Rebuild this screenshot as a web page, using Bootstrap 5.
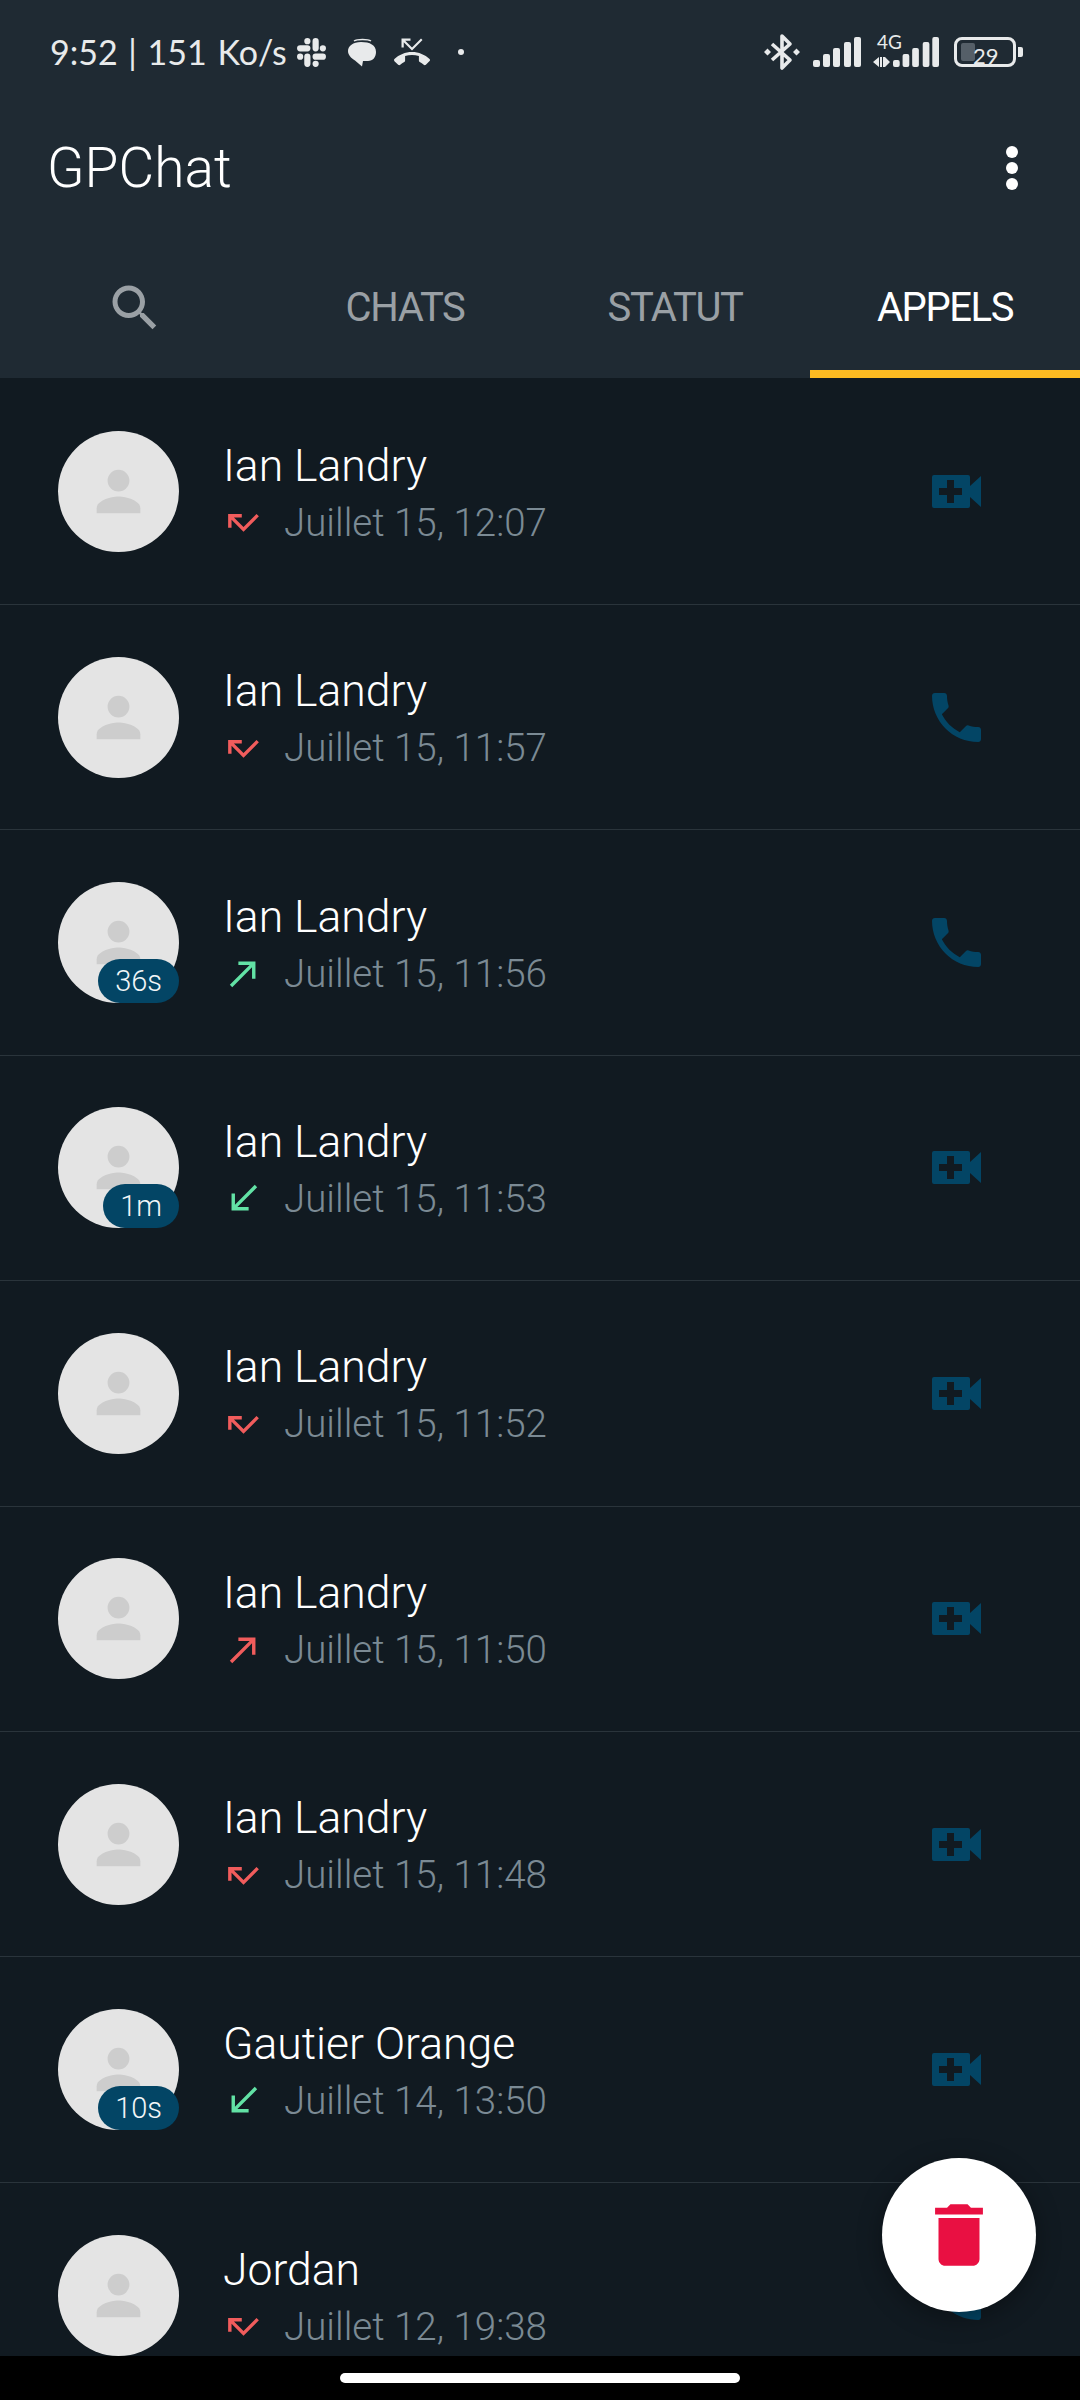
<!DOCTYPE html>
<html lang="fr">
<head>
    <meta charset="UTF-8">
    <meta name="viewport" content="width=device-width, initial-scale=1.0">
    <title>GPChat</title>
    <link href="https://cdn.jsdelivr.net/npm/bootstrap@5.3.0/dist/css/bootstrap.min.css" rel="stylesheet">
    <style>
    body {
        background-color: #000;
        font-family: Roboto, "Liberation Sans", sans-serif;
        width: 1080px;
    }
    .phone-page { height: 2400px; width: 1080px; }
    .app-head { background-color: #1f2a33; height: 378px; flex: none; }
    .status-strip { height: 104px; padding: 0 57px 0 50px; color: #e8eaeb; fill: #e8eaeb; }
    .status-time { font-family: Lato, sans-serif; font-size: 34px; word-spacing: 2px; line-height: 1; width: 246px; white-space: nowrap; }
    .st-bubble { margin-left: 21px; }
    .st-call { margin-left: 18px; }
    .st-dot { margin-left: 28px; }
    .st-bt { margin-right: 13px; }
    .st-net { margin-left: 12px; margin-right: 15px; }
    .battery-box {
        position: relative; width: 62px; height: 30px; border: 3px solid #e8eaeb; border-radius: 8px;
    }
    .battery-fill { position: absolute; left: 4px; top: 3px; width: 14px; height: 18px; background: #555f68; border-radius: 2px; }
    .battery-num { position: absolute; left: 16px; top: 5px; font-family: Lato, sans-serif; font-size: 22px; line-height: 22px; }
    .battery-nub { width: 5px; height: 10px; background: #e8eaeb; border-radius: 0 2px 2px 0; margin-left: 2px; }
    .app-bar { height: 128px; padding: 0 62px 0 47px; }
    .app-title { font-size: 55px; font-weight: 300; color: #fff; line-height: 1; }
    .kebab { width: 12px; }
    .kebab i { display: block; width: 12px; height: 12px; border-radius: 50%; background: #fff; margin-bottom: 4px; }
    .kebab i:last-child { margin-bottom: 0; }
    .tab-strip { height: 146px; flex-wrap: nowrap; }
    .tab-cell {
        width: 270px; height: 146px; padding-top: 13px; color: #9aa0a5; font-size: 40px; letter-spacing: -1.4px;
        border-bottom: 8px solid transparent; line-height: 1;
    }
    .tab-cell.tab-on { color: #fff; border-bottom-color: #fdbb22; }
    .call-list { background-color: #111a21; overflow: hidden; padding-top: 1.5px; }
    .call-row {
        height: 225.43px; padding: 0 99px 0 58px; background: transparent;
        border-color: #2a343b; border-radius: 0;
    }
    .avatar-wrap { position: relative; width: 121px; height: 121px; margin-right: 44px; flex: none; }
    .avatar-wrap svg { display: block; }
    .time-pill {
        position: absolute; right: 0; bottom: 0; height: 44px; padding: 0 17px; background: #034565;
        border-radius: 22px; color: #f2f6f8; font-size: 29px; font-weight: 300; line-height: 44px;
    }
    .call-text { padding-top: 5px; }
    .who { font-size: 44.500px; font-weight: 300; color: #fff; line-height: 56px; white-space: nowrap; }
    .when { font-size: 38.500px; font-weight: 300; color: #7b8a94; line-height: 56px; margin-top: 1px; white-space: nowrap; }
    .when svg { margin-right: 20px; flex: none; }
    .call-kind { width: 49px; flex: none; fill: #034565; }
    .fab-bin {
        position: absolute; left: 882px; top: 2158px; width: 154px; height: 154px; background: #fff;
        box-shadow: 0 6px 24px rgba(0, 0, 0, .35);
    }
    .nav-foot { height: 44px; flex: none; background: #000; }
    .home-pill { width: 400px; height: 10px; background: #fff; border-radius: 5px; margin-top: -1px; }
    </style>
</head>
<body>
<svg width="0" height="0" class="position-absolute">
    <symbol id="i-face" viewBox="0 0 122 122">
        <circle cx="61" cy="61" r="61" fill="#e4e4e4"/>
        <circle cx="61" cy="50" r="11" fill="#cdcdcd"/>
        <path d="M39 83v-5c0-8 14-12 22-12s22 4 22 12v5z" fill="#cdcdcd"/>
    </symbol>
    <symbol id="i-missed" viewBox="0 0 24 24"><path fill="#f15c5c" d="M19.59 7L12 14.59 6.41 9H11V7H3v8h2v-4.59l7 7 9-9z"/></symbol>
    <symbol id="i-out-red" viewBox="0 0 24 24"><path fill="#f15c5c" d="M9 5v2h6.59L4 18.59 5.41 20 17 8.41V15h2V5z"/></symbol>
    <symbol id="i-out" viewBox="0 0 24 24"><path fill="#62e2a5" d="M9 5v2h6.59L4 18.59 5.41 20 17 8.41V15h2V5z"/></symbol>
    <symbol id="i-in" viewBox="0 0 24 24"><path fill="#62e2a5" d="M20 5.41L18.59 4 7 15.59V9H5v10h10v-2H8.41z"/></symbol>
    <symbol id="i-video" viewBox="0 0 49 33">
        <path fill-rule="evenodd" d="M2 0h34a2 2 0 0 1 2 2v9L49 1v31L38 22v9a2 2 0 0 1-2 2H2a2 2 0 0 1-2-2V2a2 2 0 0 1 2-2zM15 5v8H7v7h8v8h7v-8h8v-7h-8V5z"/>
    </symbol>
    <symbol id="i-phone" viewBox="3 3 18 18">
        <path d="M6.62 10.79c1.44 2.83 3.76 5.14 6.59 6.59l2.2-2.2c.27-.27.67-.36 1.02-.24 1.12.37 2.33.57 3.57.57.55 0 1 .45 1 1V20c0 .55-.45 1-1 1-9.39 0-17-7.61-17-17 0-.55.45-1 1-1h3.5c.55 0 1 .45 1 1 0 1.25.2 2.45.57 3.57.11.35.03.74-.25 1.02l-2.2 2.2z"/>
    </symbol>
    <symbol id="i-bars" viewBox="0 0 48 30" preserveAspectRatio="none">
        <rect x="0" y="23" width="7" height="7" rx="2"/>
        <rect x="10" y="17" width="7" height="13" rx="2"/>
        <rect x="20" y="11" width="7" height="19" rx="2"/>
        <rect x="31" y="5" width="7" height="25" rx="2"/>
        <rect x="41" y="0" width="7" height="30" rx="2"/>
    </symbol>
</svg>

<div class="phone-page d-flex flex-column position-relative overflow-hidden">
    <header class="app-head">
        <div class="status-strip d-flex align-items-center">
            <span class="status-time">9:52 | 151 Ko/s</span>
            <svg width="31" height="31" viewBox="0 0 30 30" fill="none" stroke="#e8eaeb" stroke-width="6" stroke-linecap="round">
                <path d="M4 11h7M11 4h.01M19 4v7M26 11h.01M19 19h7M19 26h.01M11 19v7M4 19h.01"/>
            </svg>
            <svg class="st-bubble" width="28" height="29" viewBox="0 0 28 29">
                <path d="M6 3c3-2 14-2 17 0" fill="none" stroke="#e8eaeb" stroke-width="1.5"/>
                <path d="M13 4c9 0 15 3 15 10 0 5-3 9-8 9h-5l-1 5.500-7-6C3 20 0 17 0 13 0 8 5 4 13 4z"/>
            </svg>
            <svg class="st-call" width="36" height="36" viewBox="0 0 24 24"><path d="M6.500 5.500L12 11l7-7-1-1-6 6-4.500-4.500H11V3H5v6h1.500V5.500zm17.210 11.170C20.660 13.780 16.540 12 12 12 7.460 12 3.340 13.780.290 16.670c-.180.180-.290.430-.290.710s.110.530.290.710l2.480 2.480c.180.180.430.290.710.290.270 0 .520-.110.700-.280.790-.740 1.690-1.360 2.660-1.850.330-.160.560-.500.560-.900v-3.100c1.450-.480 3-.730 4.600-.730s3.150.250 4.600.720v3.100c0 .390.230.740.560.900.980.490 1.870 1.120 2.670 1.850.180.180.430.280.700.280.280 0 .530-.110.710-.290l2.480-2.480c.180-.180.290-.430.290-.710s-.120-.520-.300-.700z"/></svg>
            <svg class="st-dot" width="6" height="6" viewBox="0 0 6 6"><circle cx="3" cy="3" r="3"/></svg>

            <div class="ms-auto d-flex align-items-center">
                <svg class="st-bt" width="36" height="38" viewBox="0 0 36 38">
                    <path d="M8 11l18 16-8 8V3l8 8L8 27" fill="none" stroke="#e8eaeb" stroke-width="3.600" stroke-linejoin="round"/>
                    <path d="M3.500 15.500L7 19l-3.500 3.500L0 19zM32.500 15.500L36 19l-3.500 3.500L29 19z"/>
                </svg>
                <svg width="48" height="30"><use href="#i-bars"/></svg>
                <svg class="st-net" width="66" height="44" viewBox="0 0 66 44">
                    <text x="4" y="19" font-family="Lato, sans-serif" font-size="19" fill="#e8eaeb">4G</text>
                    <path d="M0 32l6-5v10zM7 27h2v10H7zM10 27h2v10h-2zM12 27l5 5-5 5z"/>
                    <use href="#i-bars" x="20" y="7" width="46" height="30"/>
                </svg>
                <div class="d-flex align-items-center">
                    <div class="battery-box">
                        <span class="battery-fill"></span>
                        <span class="battery-num">29</span>
                    </div>
                    <span class="battery-nub"></span>
                </div>
            </div>
        </div>

        <div class="app-bar d-flex align-items-center justify-content-between">
            <span class="app-title">GPChat</span>
            <span class="kebab"><i></i><i></i><i></i></span>
        </div>

        <nav class="nav tab-strip">
            <a class="tab-cell d-flex align-items-center justify-content-center text-decoration-none" href="#" aria-label="Rechercher">
                <svg width="60" height="60" viewBox="0 0 24 24" fill="#9aa0a5"><path d="M15.500 14h-.790l-.280-.270C15.410 12.590 16 11.110 16 9.500 16 5.910 13.090 3 9.500 3S3 5.910 3 9.500 5.910 16 9.500 16c1.610 0 3.090-.590 4.230-1.570l.270.280v.790l5 4.990L20.490 19l-4.990-5zm-6 0C7.010 14 5 11.990 5 9.500S7.010 5 9.500 5 14 7.010 14 9.500 11.990 14 9.500 14z"/></svg>
            </a>
            <a class="tab-cell d-flex align-items-center justify-content-center text-decoration-none" href="#">CHATS</a>
            <a class="tab-cell d-flex align-items-center justify-content-center text-decoration-none" href="#">STATUT</a>
            <a class="tab-cell tab-on d-flex align-items-center justify-content-center text-decoration-none" href="#">APPELS</a>
        </nav>
    </header>

    <main class="call-list flex-grow-1">
        <ul class="list-group list-group-flush">
            <li class="list-group-item call-row d-flex align-items-center">
                <div class="avatar-wrap"><svg width="121" height="121"><use href="#i-face"/></svg></div>
                <div class="call-text flex-grow-1">
                    <div class="who">Ian Landry</div>
                    <div class="when d-flex align-items-center"><svg width="41" height="41"><use href="#i-missed"/></svg>Juillet 15, 12:07</div>
                </div>
                <svg class="call-kind" width="49" height="33"><use href="#i-video"/></svg>
            </li>
            <li class="list-group-item call-row d-flex align-items-center">
                <div class="avatar-wrap"><svg width="121" height="121"><use href="#i-face"/></svg></div>
                <div class="call-text flex-grow-1">
                    <div class="who">Ian Landry</div>
                    <div class="when d-flex align-items-center"><svg width="41" height="41"><use href="#i-missed"/></svg>Juillet 15, 11:57</div>
                </div>
                <svg class="call-kind" width="49" height="49"><use href="#i-phone"/></svg>
            </li>
            <li class="list-group-item call-row d-flex align-items-center">
                <div class="avatar-wrap"><svg width="121" height="121"><use href="#i-face"/></svg><span class="time-pill">36s</span></div>
                <div class="call-text flex-grow-1">
                    <div class="who">Ian Landry</div>
                    <div class="when d-flex align-items-center"><svg width="41" height="41"><use href="#i-out"/></svg>Juillet 15, 11:56</div>
                </div>
                <svg class="call-kind" width="49" height="49"><use href="#i-phone"/></svg>
            </li>
            <li class="list-group-item call-row d-flex align-items-center">
                <div class="avatar-wrap"><svg width="121" height="121"><use href="#i-face"/></svg><span class="time-pill">1m</span></div>
                <div class="call-text flex-grow-1">
                    <div class="who">Ian Landry</div>
                    <div class="when d-flex align-items-center"><svg width="41" height="41"><use href="#i-in"/></svg>Juillet 15, 11:53</div>
                </div>
                <svg class="call-kind" width="49" height="33"><use href="#i-video"/></svg>
            </li>
            <li class="list-group-item call-row d-flex align-items-center">
                <div class="avatar-wrap"><svg width="121" height="121"><use href="#i-face"/></svg></div>
                <div class="call-text flex-grow-1">
                    <div class="who">Ian Landry</div>
                    <div class="when d-flex align-items-center"><svg width="41" height="41"><use href="#i-missed"/></svg>Juillet 15, 11:52</div>
                </div>
                <svg class="call-kind" width="49" height="33"><use href="#i-video"/></svg>
            </li>
            <li class="list-group-item call-row d-flex align-items-center">
                <div class="avatar-wrap"><svg width="121" height="121"><use href="#i-face"/></svg></div>
                <div class="call-text flex-grow-1">
                    <div class="who">Ian Landry</div>
                    <div class="when d-flex align-items-center"><svg width="41" height="41"><use href="#i-out-red"/></svg>Juillet 15, 11:50</div>
                </div>
                <svg class="call-kind" width="49" height="33"><use href="#i-video"/></svg>
            </li>
            <li class="list-group-item call-row d-flex align-items-center">
                <div class="avatar-wrap"><svg width="121" height="121"><use href="#i-face"/></svg></div>
                <div class="call-text flex-grow-1">
                    <div class="who">Ian Landry</div>
                    <div class="when d-flex align-items-center"><svg width="41" height="41"><use href="#i-missed"/></svg>Juillet 15, 11:48</div>
                </div>
                <svg class="call-kind" width="49" height="33"><use href="#i-video"/></svg>
            </li>
            <li class="list-group-item call-row d-flex align-items-center">
                <div class="avatar-wrap"><svg width="121" height="121"><use href="#i-face"/></svg><span class="time-pill">10s</span></div>
                <div class="call-text flex-grow-1">
                    <div class="who">Gautier Orange</div>
                    <div class="when d-flex align-items-center"><svg width="41" height="41"><use href="#i-in"/></svg>Juillet 14, 13:50</div>
                </div>
                <svg class="call-kind" width="49" height="33"><use href="#i-video"/></svg>
            </li>
            <li class="list-group-item call-row d-flex align-items-center">
                <div class="avatar-wrap"><svg width="121" height="121"><use href="#i-face"/></svg></div>
                <div class="call-text flex-grow-1">
                    <div class="who">Jordan</div>
                    <div class="when d-flex align-items-center"><svg width="41" height="41"><use href="#i-missed"/></svg>Juillet 12, 19:38</div>
                </div>
                <svg class="call-kind" width="49" height="49"><use href="#i-phone"/></svg>
            </li>
        </ul>
    </main>

    <button type="button" class="btn fab-bin rounded-circle d-flex align-items-center justify-content-center p-0" aria-label="Supprimer">
        <svg width="82" height="82" viewBox="0 0 24 24" fill="#e91042"><path d="M6 19c0 1.100.900 2 2 2h8c1.100 0 2-.900 2-2V7H6v12zM19 4h-3.500l-1-1h-5l-1 1H5v2h14V4z"/></svg>
    </button>

    <footer class="nav-foot d-flex align-items-center justify-content-center">
        <span class="home-pill"></span>
    </footer>
</div>
<script src="https://cdn.jsdelivr.net/npm/bootstrap@5.3.0/dist/js/bootstrap.bundle.min.js"></script>
</body>
</html>
